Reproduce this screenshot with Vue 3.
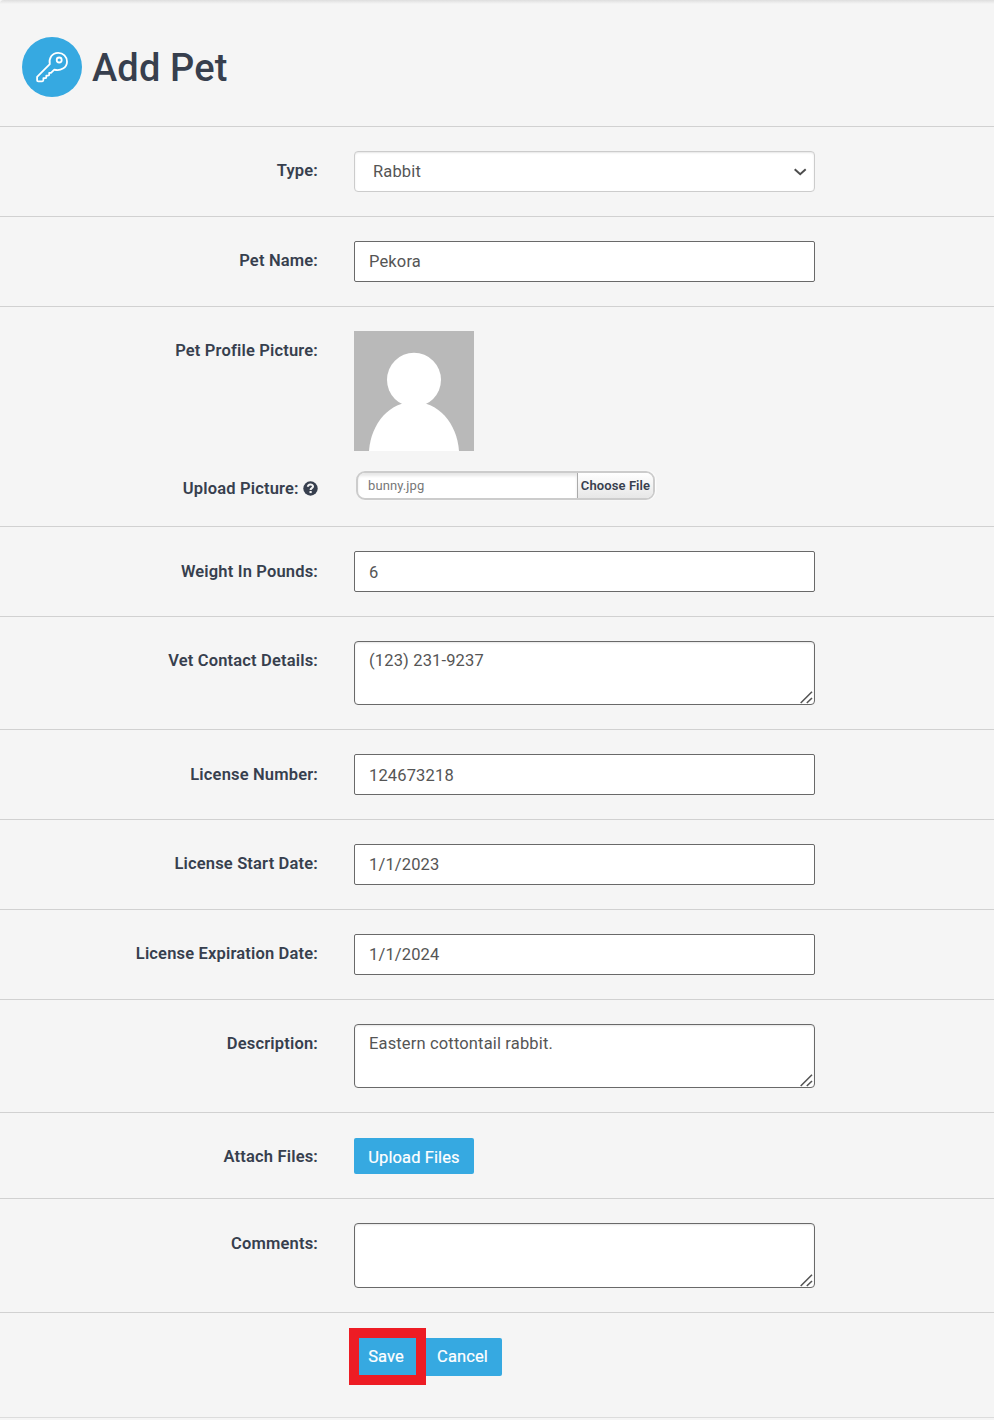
<script setup>
const rows = [
  { label: 'Type:', kind: 'select', value: 'Rabbit' },
  { label: 'Pet Name:', kind: 'input', value: 'Pekora' },
  { label: 'Pet Profile Picture:', kind: 'picture', value: 'bunny.jpg' },
  { label: 'Weight In Pounds:', kind: 'input', value: '6', low: true },
  { label: 'Vet Contact Details:', kind: 'textarea', value: '(123) 231-9237' },
  { label: 'License Number:', kind: 'input', value: '124673218', low: true },
  { label: 'License Start Date:', kind: 'input', value: '1/1/2023' },
  { label: 'License Expiration Date:', kind: 'input', value: '1/1/2024' },
  { label: 'Description:', kind: 'textarea', value: 'Eastern cottontail rabbit.' },
  { label: 'Attach Files:', kind: 'attach' },
  { label: 'Comments:', kind: 'textarea', value: '', tall: true },
]
</script>

<template>
  <main class="panel">
    <header class="head">
      <span class="badge">
        <svg width="60" height="60" viewBox="0 0 60 60" fill="none" stroke="#fff" stroke-width="1.8" stroke-linejoin="round" stroke-linecap="round">
          <path d="M27.8 27.2 L15.1 39.8 V43.2 Q15.1 44.3 16.2 44.3 H20.2 Q21.4 44.3 21.4 43.1 V41.2 H23.3 Q24.3 41.2 24.3 40.2 V38.7 H26 Q27.2 38.7 27.2 37.5 V35.8 H29 L32.3 32.6 C38.4 34.4 45 30.7 45 24.7 C45 19.7 41.2 15.8 36.2 15.8 C30 15.8 26.6 21.2 27.8 27.2 Z" />
          <circle cx="37.2" cy="23" r="2.5" />
        </svg>
      </span>
      <h1>Add Pet</h1>
    </header>

    <section v-for="row in rows" :key="row.label" class="row" :class="[row.kind, { low: row.low, tall: row.tall }]">
      <label class="label">{{ row.label }}</label>
      <div class="field">
        <div v-if="row.kind === 'select'" class="select-box">
          <span>{{ row.value }}</span>
          <svg width="14" height="10" viewBox="0 0 14 10" fill="none" stroke="#4d4d4d" stroke-width="2"><path d="M1.7 2.2 L7.2 7.2 L12.7 2.2" /></svg>
        </div>
        <input v-else-if="row.kind === 'input'" class="box" type="text" :value="row.value" />
        <div v-else-if="row.kind === 'textarea'" class="area-wrap">
          <textarea class="box area" :value="row.value"></textarea>
          <svg class="grip" width="13" height="13" viewBox="0 0 13 13" fill="none" stroke="#555" stroke-width="1.6"><path d="M.7 12 L12 .8 M6.8 12 L12 7" /></svg>
        </div>
        <svg v-else-if="row.kind === 'picture'" class="avatar" width="120" height="120" viewBox="0 0 120 120">
          <rect width="120" height="120" fill="#b9b9b9" />
          <circle cx="60" cy="48.8" r="27" fill="#fff" />
          <path d="M15 120 C17 92 36 70.8 60 70.8 C84 70.8 103 92 105 120 Z" fill="#fff" />
        </svg>
        <button v-else class="btn" type="button">Upload Files</button>
      </div>
      <template v-if="row.kind === 'picture'">
        <label class="label upload-label">Upload Picture:
          <svg width="15" height="15" viewBox="0 0 15 15"><circle cx="7.5" cy="7.5" r="7.2" fill="#373f4e" /><path d="M4.9 5.8 C5 2.9 10 2.8 10 5.5 C10 7.2 7.6 7 7.6 8.9" fill="none" stroke="#f4f4f4" stroke-width="2.1" /><rect x="6.5" y="10" width="2.2" height="2.1" fill="#f4f4f4" /></svg>
        </label>
        <div class="file">
          <span class="file-name">{{ row.value }}</span>
          <button class="choose" type="button">Choose File</button>
        </div>
      </template>
    </section>

    <footer class="actions">
      <div class="save-mark"><button class="btn save" type="button">Save</button></div>
      <button class="btn cancel" type="button">Cancel</button>
    </footer>
  </main>
</template>

<style>
body { margin: 0; background: #f5f5f5; }
</style>

<style scoped>
* { box-sizing: border-box; }
.panel {
  height: 1418px;
  background: linear-gradient(#dedede, #f5f5f5 4px);
  border-bottom: 1px solid #dcdcdc;
  border-top-left-radius: 4px;
  color: #373f4e;
  font-family: Roboto, "Liberation Sans", sans-serif;
  font-size: 16.5px;
}
.head { height: 126px; padding: 37px 0 0 22px; display: flex; gap: 10px; }
.badge { width: 60px; height: 60px; border-radius: 50%; background: #36a9e1; }
.badge svg { display: block; }
h1 { margin: 0; font-size: 38px; line-height: 63px; font-weight: 500; letter-spacing: .15px; }
.row {
  border-top: 1px solid #d1d1d1;
  padding: 24px 0;
  display: grid;
  grid-template-columns: 318px 461px;
  column-gap: 36px;
  align-items: start;
}
.label { text-align: right; font-size: 16.5px; font-weight: 600; line-height: 22px; letter-spacing: .17px; padding-top: 9px; white-space: nowrap; }
.low .label { padding-top: 10px; }
.box, .select-box {
  display: block;
  width: 461px;
  height: 41px;
  margin: 0;
  border: 1px solid #696969;
  border-radius: 2px;
  background: #fff;
  color: #555;
  font: 400 16.5px/22px Roboto, "Liberation Sans", sans-serif;
  letter-spacing: .15px;
  padding: 0 14px;
  outline: none;
}
.low .box { padding-top: 2px; }
.select-box {
  display: flex;
  align-items: center;
  justify-content: space-between;
  border-color: #ccc;
  border-radius: 4px;
  padding: 1px 7px 0 18px;
  box-shadow: inset 0 1px 2px #e6e6e6;
}
.area-wrap { position: relative; }
.area { height: 64px; border-radius: 4px; resize: none; padding: 8px 14px; box-shadow: inset 0 1px 2px #e6e6e6; overflow: hidden; }
.tall .area { height: 65px; }
.tall .label { padding-top: 10px; }
.grip { position: absolute; right: 2px; bottom: 1px; }
.avatar { display: block; }
.picture { height: 220px; grid-template-rows: 120px auto; row-gap: 20px; padding-bottom: 0; }
.upload-label { padding-top: 7px; }
.upload-label svg { vertical-align: -2px; }
.file {
  display: flex;
  width: 299px;
  height: 29px;
  margin-left: 2px;
  border: 2px solid #ccc;
  border-radius: 9px;
  background: #fff;
  box-shadow: 1px 0 2px #fff;
  overflow: hidden;
}
.file-name { flex: 1; padding-left: 10px; color: #777; font-size: 13px; line-height: 26px; letter-spacing: .1px; box-shadow: inset 0 3px 3px #e8e8e8; }
.choose {
  width: 76px;
  border: 0;
  border-left: 1px solid #aaa;
  padding: 0 0 1px;
  background: linear-gradient(#fff, #e7e7e7);
  color: #373f4e;
  font: 600 13px/23px Roboto, "Liberation Sans", sans-serif;
  letter-spacing: .1px;
  white-space: nowrap;
}
.btn {
  border: 0;
  border-radius: 2px;
  background: #36a9e1;
  color: #fff;
  font: 400 16.5px/22px Roboto, "Liberation Sans", sans-serif;
  -webkit-text-stroke: .2px #fff;
  letter-spacing: .1px;
  padding: 0;
  white-space: nowrap;
}
.attach { height: 86px; }
.attach .btn { display: block; width: 120px; height: 36px; margin-top: 1px; padding-top: 3px; }
.actions { border-top: 1px solid #d1d1d1; padding: 15px 0 0 349px; display: flex; }
.save-mark { width: 77px; height: 57px; padding: 10px; background: #ed1c24; }
.save { display: block; width: 57px; height: 37px; border-radius: 0; padding-right: 3px; }
.cancel { width: 76px; height: 38px; margin-top: 10px; border-radius: 0 2px 2px 0; padding-right: 3px; padding-bottom: 1px; }
</style>
